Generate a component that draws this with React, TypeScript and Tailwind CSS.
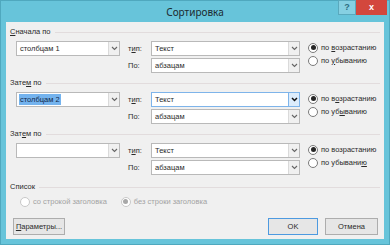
import React from "react";

// Диалог "Сортировка" в стиле Windows 8

function Chevron({ dark }: { dark?: boolean }) {
  return (
    <svg width="7" height="5" viewBox="0 0 7 5">
      <path
        d="M1 1l2.5 2.5L6 1"
        fill="none"
        stroke={dark ? "#111" : "#666"}
        strokeWidth={dark ? 1.5 : 1.1}
      />
    </svg>
  );
}

function Combo({
  value,
  className,
  selected,
  active,
}: {
  value?: string;
  className: string;
  selected?: boolean;
  active?: boolean;
}) {
  return (
    <div
      className={`flex h-[15px] items-stretch border bg-white ${className} ${
        active ? "border-[#7eb4ea]" : "border-[#b9b9b9]"
      }`}
    >
      <div className="flex flex-1 items-center overflow-hidden pl-[2px] leading-none">
        {selected ? (
          <span className="bg-[#74b3ee] px-[1px] py-[2px] text-[#10284a]">{value}</span>
        ) : (
          <span className="pl-[1px]">{value}</span>
        )}
      </div>
      <div
        className={`flex w-[11px] items-center justify-center border-l ${
          active ? "border-[#7eb4ea] bg-[#dcecfc]" : "border-[#dadada] bg-[#f0f0f0]"
        }`}
      >
        <Chevron dark={active} />
      </div>
    </div>
  );
}

function Radio({
  checked,
  disabled,
  children,
}: {
  checked?: boolean;
  disabled?: boolean;
  children: React.ReactNode;
}) {
  return (
    <div className={`flex h-[13px] items-center gap-[3px] ${disabled ? "text-[#a3a3a3]" : ""}`}>
      <span
        className={`flex h-[10px] w-[10px] items-center justify-center rounded-full border bg-white ${
          disabled ? "border-[#c8c8c8]" : "border-[#7a7a7a]"
        }`}
      >
        {checked && (
          <span className={`h-[5px] w-[5px] rounded-full ${disabled ? "bg-[#a8a8a8]" : "bg-[#262626]"}`} />
        )}
      </span>
      <span className="leading-none">{children}</span>
    </div>
  );
}

function GroupLabel({ children }: { children: React.ReactNode }) {
  return (
    <div className="flex h-[12px] items-center gap-[4px]">
      <span className="leading-none">{children}</span>
      <div className="mr-[4px] h-px flex-1 bg-[#e2dcdd]" />
    </div>
  );
}

type Level = {
  label: React.ReactNode;
  column: string;
  selected?: boolean;
  active?: boolean;
  asc: React.ReactNode;
  desc: React.ReactNode;
};

function SortLevel({ level }: { level: Level }) {
  return (
    <div className="flex flex-col">
      <GroupLabel>{level.label}</GroupLabel>
      <div className="mt-[3px] mb-[4px] flex">
        <Combo value={level.column} className="ml-[6px] w-[104px]" selected={level.selected} />
        <div className="ml-[8px] flex flex-col gap-[2px]">
          <div className="flex items-center">
            <span className="w-[23px] leading-none">
              т<u>и</u>п:
            </span>
            <Combo value="Текст" className="w-[149px]" active={level.active} />
          </div>
          <div className="flex items-center">
            <span className="w-[23px] leading-none">По:</span>
            <Combo value="абзацам" className="w-[149px]" />
          </div>
        </div>
        <div className="ml-[8px] flex flex-col">
          <Radio checked>{level.asc}</Radio>
          <Radio>{level.desc}</Radio>
        </div>
      </div>
    </div>
  );
}

export default function App() {
  const levels: Level[] = [
    {
      label: (
        <>
          <u>С</u>начала по
        </>
      ),
      column: "столбцам 1",
      asc: (
        <>
          по <u>в</u>озрастанию
        </>
      ),
      desc: (
        <>
          по <u>у</u>быванию
        </>
      ),
    },
    {
      label: (
        <>
          Зате<u>м</u> по
        </>
      ),
      column: "столбцам 2",
      selected: true,
      active: true,
      asc: (
        <>
          по в<u>о</u>зрастанию
        </>
      ),
      desc: (
        <>
          по уб<u>ы</u>ванию
        </>
      ),
    },
    {
      label: (
        <>
          Зат<u>е</u>м по
        </>
      ),
      column: "",
      asc: <>по возрастанию</>,
      desc: (
        <>
          по убывани<u>ю</u>
        </>
      ),
    },
  ];

  return (
    <div className="flex h-[245px] w-[390px] flex-col border border-[#4fa8be] bg-[#67c4da] font-['Liberation_Sans',Arial,sans-serif] text-[7.5px] text-[#2a2a2a]">
      <div className="relative flex h-[21px] shrink-0 items-center justify-center">
        <span className="font-['Noto_Sans',sans-serif] text-[10px] leading-none text-[#1c2a30]">Сортировка</span>
        <div className="absolute top-[-1px] right-[2px] flex h-[15px]">
          <div className="flex w-[18px] items-center justify-center border border-[#5aa9bd] bg-[#86d0e2] text-[9px] font-bold text-[#2d6d80]">
            ?
          </div>
          <div className="flex w-[31px] items-center justify-center bg-[#d3473d] text-[9px] font-bold text-white">
            x
          </div>
        </div>
      </div>
      <div className="mx-[5px] mb-[5px] flex flex-1 flex-col bg-[#f0f0f0] pt-[4px] pl-[4px]">
        {levels.map((level, i) => (
          <SortLevel key={i} level={level} />
        ))}
        <div className="mt-[2px]">
          <GroupLabel>Список</GroupLabel>
        </div>
        <div className="mt-[2px] flex items-center">
          <div className="ml-[10px]">
            <Radio disabled>со строкой заголовка</Radio>
          </div>
          <div className="ml-[14px]">
            <Radio checked disabled>
              без строки заголовка
            </Radio>
          </div>
        </div>
        <div className="mt-[10px] flex items-center pr-[6px]">
          <button className="ml-[3px] flex h-[17px] w-[52px] items-center justify-center border border-[#adadad] bg-[#e6e6e6] leading-none">
            <u>П</u>араметры...
          </button>
          <div className="flex-1" />
          <button className="flex h-[17px] w-[50px] items-center justify-center border border-[#4d9ae0] bg-[#e6e6e6] leading-none">
            OK
          </button>
          <button className="ml-[7px] flex h-[17px] w-[53px] items-center justify-center border border-[#adadad] bg-[#e6e6e6] leading-none">
            Отмена
          </button>
        </div>
      </div>
    </div>
  );
}
